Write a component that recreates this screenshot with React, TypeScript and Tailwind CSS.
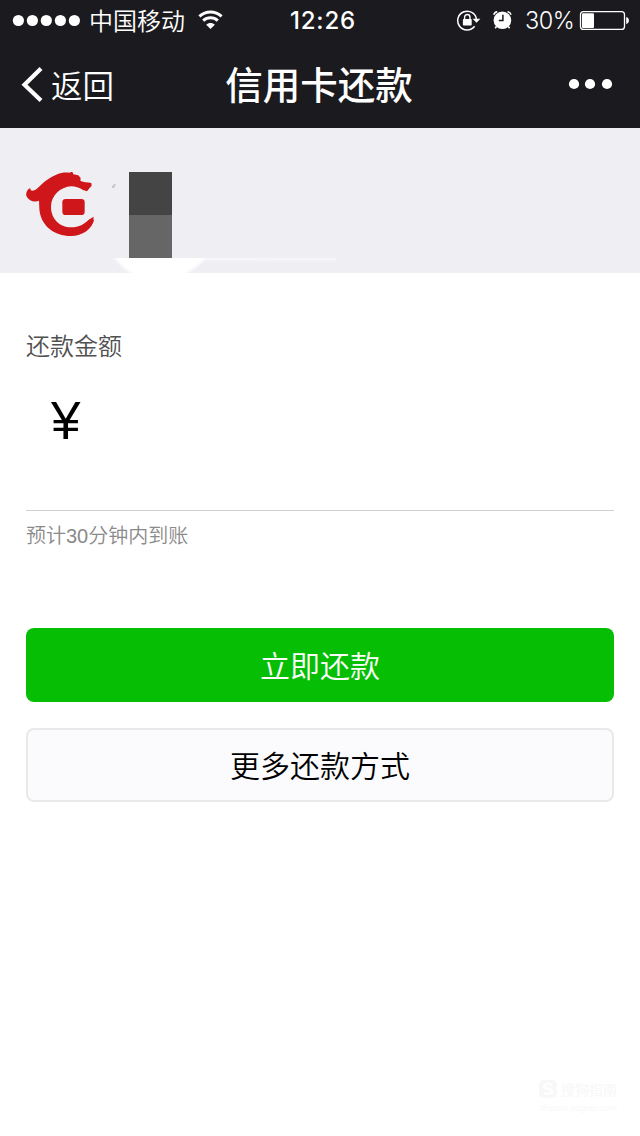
import React from "react";

function StatusBar() {
  return (
    <div className="flex h-10 items-center text-white">
      <svg className="ml-3 shrink-0" width="70" height="40" viewBox="0 0 70 40" fill="#fff">
        <circle cx="6.4" cy="20.5" r="5.6" />
        <circle cx="20.4" cy="20.5" r="5.6" />
        <circle cx="34.3" cy="20.5" r="5.6" />
        <circle cx="48.4" cy="20.5" r="5.6" />
        <circle cx="62.4" cy="20.5" r="5.6" />
      </svg>
      <span className="ml-[7px] w-[97px] shrink-0 whitespace-nowrap text-[24px] leading-10 font-[350]">中国移动</span>
      <svg className="ml-3 shrink-0" width="26" height="40" viewBox="0 0 26 40">
        <g fill="none" stroke="#fff" strokeWidth="3">
          <path d="M1.4 16.4C7.8 10.5 17.2 10.5 23.6 16.4" />
          <path d="M5.2 20.7C9.4 16.9 15.6 16.9 19.8 20.7" />
        </g>
        <path d="M12.5 29L8.2 24.7C10.5 22.3 14.5 22.3 16.8 24.7Z" fill="#fff" />
      </svg>
      <span className="ml-[66px] w-[80px] shrink-0 whitespace-nowrap pt-[2px] font-['Inter','Liberation_Sans',sans-serif] text-[24px] leading-10 font-medium tracking-[0.8px]">12:26</span>
      <svg className="ml-[86px] shrink-0" width="26" height="40" viewBox="456 0 26 40">
        <path d="M474.6 26.3A9.4 9.4 0 1 1 476.5 20" fill="none" stroke="#fff" strokeWidth="1.5" />
        <path d="M472.6 18.8H480.4L476.5 22.8Z" fill="#fff" />
        <rect x="462.9" y="19" width="8.8" height="6.6" rx=".8" fill="#fff" />
        <path d="M464.6 19.5V17.2a2.7 2.7 0 0 1 5.4 0V19.5" fill="none" stroke="#fff" strokeWidth="1.4" />
      </svg>
      <svg className="ml-[10px] shrink-0" width="22" height="40" viewBox="492 0 22 40">
        <circle cx="502.4" cy="20.3" r="8.8" fill="#fff" />
        <path d="M493.8 14.8C494.2 13.2 495.4 11.9 497.3 11.7M511 14.8C510.6 13.2 509.4 11.9 507.5 11.7" fill="none" stroke="#fff" strokeWidth="1.6" />
        <path d="M496.5 26.5l-1.3 1.8M508.3 26.5l1.3 1.8" stroke="#fff" strokeWidth="1.6" />
        <path d="M502.9 14.8V20.6H498.8" fill="none" stroke="#1b1b1f" strokeWidth="1.5" />
      </svg>
      <span className="ml-[11px] w-[50px] shrink-0 whitespace-nowrap pt-[2px] font-['Inter','Liberation_Sans',sans-serif] text-[23.5px] leading-10 font-[350] tracking-[-0.5px]">30%</span>
      <svg className="ml-[4px] shrink-0" width="52" height="40" viewBox="579 0 52 40">
        <rect x="580.5" y="11.6" width="44" height="17.8" rx="3" fill="none" stroke="#fff" strokeWidth="1.3" />
        <rect x="582" y="13.2" width="12" height="14.7" rx="1" fill="#fff" />
        <path d="M626.2 17C629.8 17.7 629.8 23.4 626.2 24.1Z" fill="#fff" />
      </svg>
    </div>
  );
}

function NavBar() {
  return (
    <div className="grid h-[88px] grid-cols-[200px_240px_200px] items-center text-white">
      <button className="flex items-center text-left">
        <svg className="ml-5 shrink-0" width="24" height="88" viewBox="20 40 24 88">
          <path d="M41 68.5L24.5 84.7L41 100.5" fill="none" stroke="#fff" strokeWidth="4.2" />
        </svg>
        <span className="ml-[7px] text-[31.5px] leading-[86px] font-[350]">返回</span>
      </button>
      <h1 className="-ml-[2px] pb-[2px] text-center text-[37.5px] leading-[86px] font-medium">信用卡还款</h1>
      <svg width="200" height="88" viewBox="440 40 200 88" fill="#fff">
        <circle cx="574" cy="84" r="5.1" />
        <circle cx="590" cy="84" r="5.1" />
        <circle cx="607" cy="84" r="5.1" />
      </svg>
    </div>
  );
}

function BankLogo() {
  return (
    <svg className="mt-11 ml-[26px] shrink-0" width="70" height="66" viewBox="48 36 210 198" fill="#cf171b">
      <path d="M61 84C60 94 70 94 79 88C94 74 110 56 137 45C151 38 166 37 178 38L187 35L190 43L205 46L212 54L211 62C221 68 232 65 244 69L245 77L237 86L231 94L219 90C207 83 196 79 184 79C150 81 124 107 123 139C122 174 147 202 184 202C207 202 224 192 235 180L251 170L250 181L253 178C245 209 218 228 183 228C131 228 91 195 88 146L87 122C76 127 56 124 49 107C47 98 52 88 61 84Z" />
      <rect x="157" y="117" width="67" height="48" rx="10" />
    </svg>
  );
}

function BankRow() {
  return (
    <section className="flex h-[145px] items-start bg-[#efeef3]">
      <BankLogo />
      <svg className="shrink-0" width="280" height="145" viewBox="96 128 280 145">
        <defs>
          <filter id="soft" x="-20%" y="-50%" width="140%" height="200%">
            <feGaussianBlur stdDeviation="1.5" />
          </filter>
          <clipPath id="lower">
            <rect x="96" y="258" width="280" height="15" />
          </clipPath>
        </defs>
        <path d="M112 188Q112 184 116 184L114 188Z" fill="#c4c3c8" />
        <g clipPath="url(#lower)">
          <g filter="url(#soft)">
            <path d="M112 254H209C202 264 191 271 182 276H135C126 270 118 264 112 254Z" fill="#fff" />
            <path d="M206 257H336V260.5H300L250 260L206 260Z" fill="#f9f8fb" />
          </g>
        </g>
        <rect x="129" y="172" width="43" height="43" fill="#444444" />
        <rect x="129" y="215" width="43" height="43" fill="#666666" />
      </svg>
    </section>
  );
}

function Watermark() {
  return (
    <footer className="mt-auto mr-[23px] mb-[22px] flex flex-col items-end text-[#f8f8f8]">
      <div className="flex items-center gap-1">
        <svg width="18" height="18" viewBox="0 0 18 18">
          <rect width="18" height="18" rx="5" fill="#f8f8f8" />
          <path d="M13 5.2C10 3 5 3.5 5 6.3C5 9.5 13 8 13 11.3C13 14.5 7.5 14.8 4.8 12.4" fill="none" stroke="#fff" strokeWidth="2" />
        </svg>
        <span className="text-[14px] leading-[20px] font-medium">搜狗指南</span>
      </div>
      <span className="mt-[3px] font-['Liberation_Sans',sans-serif] text-[9.5px] leading-[12px]">zhinan.sogou.com</span>
    </footer>
  );
}

export default function App() {
  return (
    <main className="flex h-[1136px] w-[640px] flex-col overflow-hidden bg-white font-['Noto_Sans_CJK_SC',sans-serif]">
      <header className="bg-[#1b1b1f]">
        <StatusBar />
        <NavBar />
      </header>
      <BankRow />
      <section className="flex flex-col px-[26px] pt-[54px]">
        <h2 className="text-[24px] leading-[36px] font-[350] text-[#505050]">还款金额</h2>
        <div className="flex h-[148px] items-start border-b border-[#d0d0d0] pt-[31px] pl-[25px]">
          <span className="font-['Liberation_Sans',sans-serif] text-[53px] leading-[54px] text-black">¥</span>
        </div>
        <p className="mt-[9px] text-[20px] leading-[30px] font-[350] text-[#8a8a8a]">
          预计<span className="font-['Liberation_Sans',sans-serif]">30</span>分钟内到账
        </p>
        <button className="mt-[77px] h-[74px] rounded-lg bg-[#06bf04] pb-[2px] text-[30px] leading-[72px] font-[350] text-white">立即还款</button>
        <button className="mt-[26px] h-[74px] rounded-lg border-2 border-[#e9e9eb] bg-[#fbfbfd] pb-[2px] text-[30px] leading-[68px] font-[350] text-black">更多还款方式</button>
      </section>
      <Watermark />
    </main>
  );
}
